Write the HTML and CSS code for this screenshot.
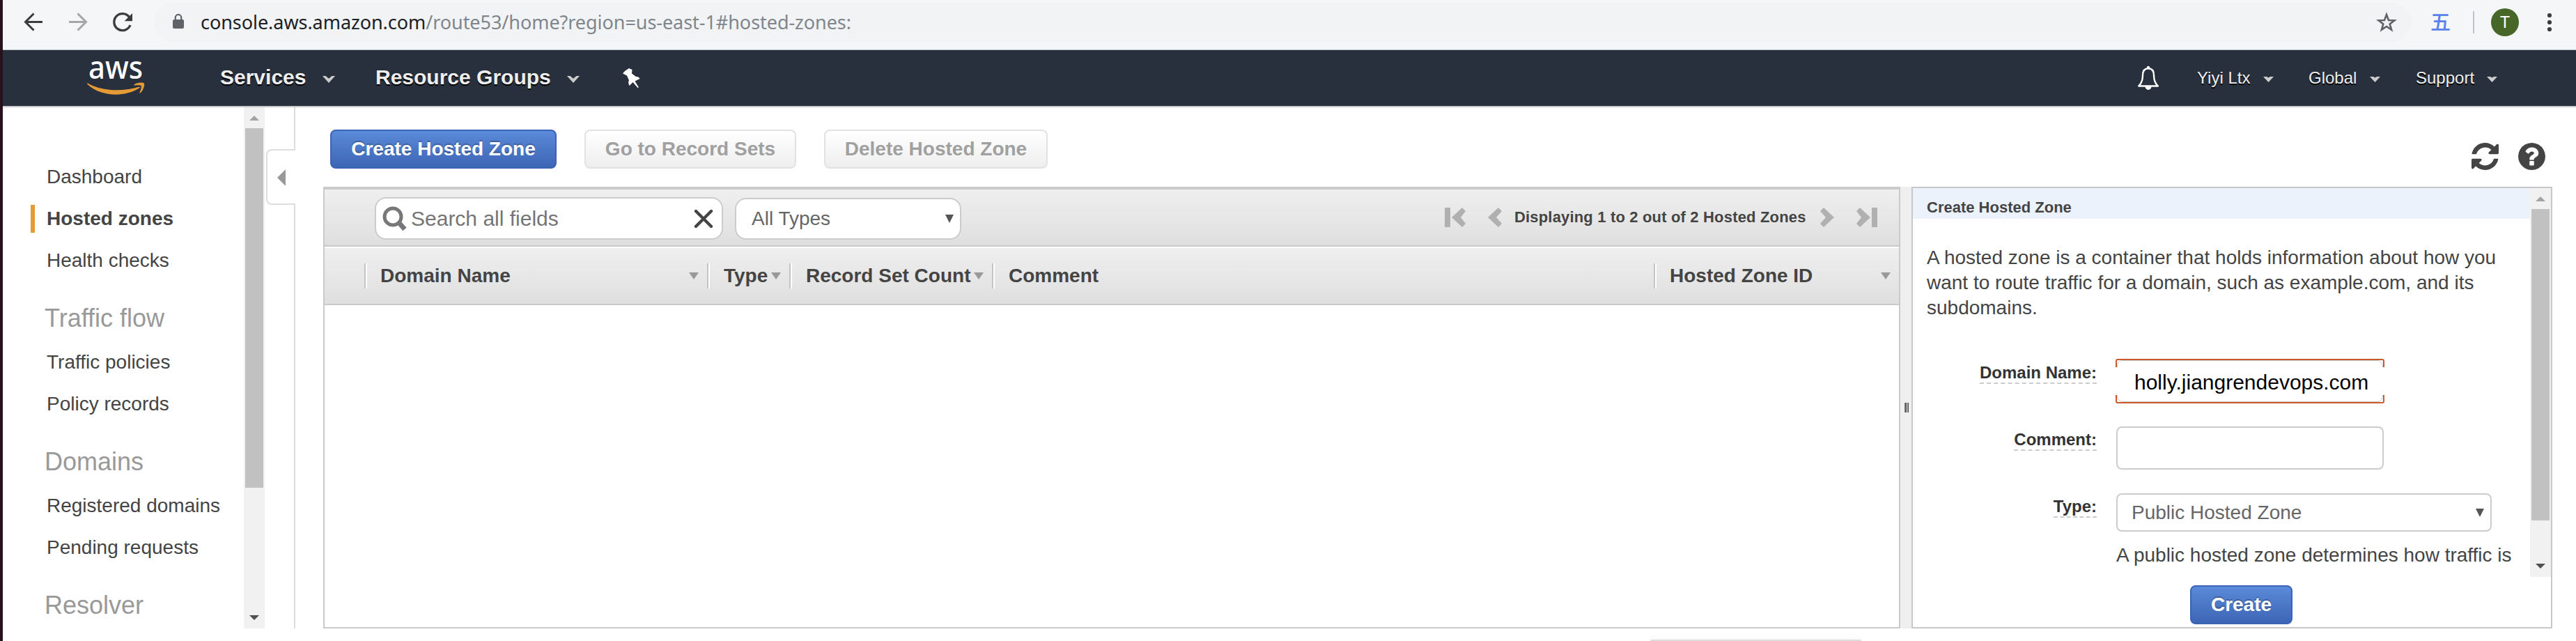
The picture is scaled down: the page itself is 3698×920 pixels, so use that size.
FILE: index.html
```html
<!DOCTYPE html>
<html lang="en">
<head>
<meta charset="utf-8">
<title>Route 53 Console - Hosted Zones</title>
<link rel="stylesheet" href="styles.css">
</head>
<body>
<header class="browser">
  <svg class="browser-nav" viewBox="0 0 217 71" width="217" height="71" fill="none">
    <g stroke="#3c3c3c" stroke-width="3"><path d="M57 31.5H33M44.500 19.500L32.500 31.500L44.500 43.500"/></g>
    <g stroke="#a6a6a6" stroke-width="3"><path d="M95 31.5h24M107.500 19.500l12 12l-12 12"/></g>
    <path d="M181.500 24.500A12 12 0 1 0 183 36" stroke="#3c3c3c" stroke-width="3.400"/>
    <path d="M186 19v11.300h-11.300z" fill="#3c3c3c"/>
  </svg>
  <div class="omnibox">
    <svg class="lock" viewBox="0 0 18 22" width="18" height="22"><rect x="1" y="8" width="16" height="13" rx="2" fill="#5f6368"/><path d="M4.800 9V5.200a4.200 4.200 0 0 1 8.400 0V9" fill="none" stroke="#5f6368" stroke-width="2.200"/></svg>
    <div class="url"><span class="url-host">console.aws.amazon.com</span><span class="url-path">/route53/home?region=us-east-1#hosted-zones:</span></div>
    <svg class="star" viewBox="0 0 30 30" width="30" height="30"><path d="M15 4l3 8 8.400.300-6.700 5.200 2.400 8.200-7.100-4.700-7.100 4.700 2.400-8.200-6.700-5.200 8.400-.300z" fill="none" stroke="#5f6368" stroke-width="2.600"/></svg>
  </div>
  <span class="ext">五</span>
  <span class="divider"></span>
  <span class="avatar">T</span>
  <svg class="dots" viewBox="0 0 8 28" width="8" height="28" fill="#3c3c3c"><circle cx="4" cy="4" r="3.100"/><circle cx="4" cy="14" r="3.100"/><circle cx="4" cy="24" r="3.100"/></svg>
</header>

<nav class="topnav">
  <svg class="logo" viewBox="0 0 84 50" width="84" height="50">
    <text class="logo-text" x="2" y="26" textLength="78" lengthAdjust="spacingAndGlyphs">aws</text>
    <path d="M1 32.500C24 45.500 54 44 75 37.500L76 38.800C56 52.500 20 53 0 33.500C-.200 32.600.300 32.200 1 32.500z" fill="#e59b35"/>
    <path d="M67.500 34.500C72 31 80 31 81.800 32.500C83.200 34.500 81 42.500 76.500 46.500C75.800 47 75.200 46.600 75.500 45.800C77 42 78.500 37.500 77.500 36C76.500 34.800 71 35.200 68.300 35.600C67.400 35.700 67 35 67.500 34.500z" fill="#e59b35"/>
  </svg>
  <a class="nav-main nav-services">Services</a>
  <svg class="caret" viewBox="0 0 18 10" width="18" height="10"><path d="M0 0h4.500L9 3.800 13.500 0H18L9 10z" fill="#ccc"/></svg>
  <a class="nav-main nav-groups">Resource Groups</a>
  <svg class="caret" viewBox="0 0 18 10" width="18" height="10"><path d="M0 0h4.500L9 3.800 13.500 0H18L9 10z" fill="#ccc"/></svg>
  <svg class="pin" viewBox="0 0 26 28" width="26" height="28"><path d="M9 0L13.500 2 13 7.500 19 12C21 11.500 23.500 12.500 24.500 15L17.500 18.500 23 27.500 21.500 28 14.500 20 9.500 25C8 22 7.500 19.500 9 17.500L6 10.500 0 7.500C1.500 5 4.500 2.500 9 0z" fill="#fff"/></svg>
  <svg class="bell" viewBox="0 0 32 36" width="32" height="36"><path d="M16 4.300C10 4.300 8 9 8 14C8 22 6 26 2.200 29.500H29.800C26 26 24 22 24 14C24 9 22 4.300 16 4.300z" fill="none" stroke="#fff" stroke-width="2.400" stroke-linejoin="round"/><circle cx="16" cy="3" r="2.200" fill="#fff"/><path d="M11.500 30a4.500 5 0 0 0 9 0z" fill="#fff"/></svg>
  <a class="nav-sub nav-user">Yiyi Ltx</a>
  <svg class="caret-sm" viewBox="0 0 15 8" width="15" height="8"><path d="M0 0h5l2.500 1.600L10 0h5L7.500 8z" fill="#ccc"/></svg>
  <a class="nav-sub nav-region">Global</a>
  <svg class="caret-sm" viewBox="0 0 15 8" width="15" height="8"><path d="M0 0h5l2.500 1.600L10 0h5L7.500 8z" fill="#ccc"/></svg>
  <a class="nav-sub nav-support">Support</a>
  <svg class="caret-sm" viewBox="0 0 15 8" width="15" height="8"><path d="M0 0h5l2.500 1.600L10 0h5L7.500 8z" fill="#ccc"/></svg>
</nav>

<div class="page">
  <aside class="sidebar">
    <a class="item">Dashboard</a>
    <a class="item active">Hosted zones</a>
    <a class="item">Health checks</a>
    <h2 class="group">Traffic flow</h2>
    <a class="item">Traffic policies</a>
    <a class="item">Policy records</a>
    <h2 class="group">Domains</h2>
    <a class="item">Registered domains</a>
    <a class="item">Pending requests</a>
    <h2 class="group">Resolver</h2>
  </aside>
  <div class="scrollbar side-scroll">
    <svg class="sb-arrow" viewBox="0 0 14 7" width="14" height="7"><path d="M7 0l7 7H0z" fill="#a3a3a3"/></svg>
    <div class="thumb"></div>
    <svg class="sb-arrow sb-down" viewBox="0 0 14 7" width="14" height="7"><path d="M7 7l7-7H0z" fill="#505050"/></svg>
  </div>
  <div class="gutter">
    <div class="rail rail-top"></div>
    <div class="toggle"><svg viewBox="0 0 12 24" width="12" height="24"><path d="M0 12L12 0v24z" fill="#999"/></svg></div>
    <div class="rail rail-bottom"></div>
  </div>

  <main class="main">
    <div class="actions">
      <button class="btn primary create-zone">Create Hosted Zone</button>
      <button class="btn disabled go-records">Go to Record Sets</button>
      <button class="btn disabled delete-zone">Delete Hosted Zone</button>
      <svg class="refresh" viewBox="0 128 1536 1536" width="39" height="39"><path fill="#444" d="M1511 1056q0 5-1 7-64 268-268 434.500t-478 166.500q-146 0-282.500-55t-243.500-157l-129 129q-19 19-45 19t-45-19-19-45v-448q0-26 19-45t45-19h448q26 0 45 19t19 45-19 45l-137 137q71 66 161 102t187 36q134 0 250-65t186-179q11-17 53-117 8-23 30-23h192q13 0 22.500 9.500t9.500 22.500zm25-800v448q0 26-19 45t-45 19h-448q-26 0-45-19t-19-45 19-45l138-138q-148-137-349-137-134 0-250 65t-186 179q-11 17-53 117-8 23-30 23h-199q-13 0-22.500-9.500t-9.500-22.500v-7q65-268 270-434.500t480-166.500q146 0 284 55.500t245 156.500l130-129q19-19 45-19t45 19 19 45z"/></svg>
      <svg class="help" viewBox="0 128 1536 1536" width="39" height="39"><path fill="#444" d="M896 1376v-192q0-14-9-23t-23-9h-192q-14 0-23 9t-9 23v192q0 14 9 23t23 9h192q14 0 23-9t9-23zm256-672q0-88-55.500-163t-138.500-116-170-41q-243 0-371 213-15 24 8 42l132 100q7 6 19 6 16 0 25-12 53-68 86-92 34-24 86-24 48 0 85.500 26t37.500 59q0 38-20 61t-68 45q-63 28-115.500 86.500t-52.500 125.500v36q0 14 9 23t23 9h192q14 0 23-9t9-23q0-19 21.500-49.500t54.500-49.500q32-18 49-28.500t46-35 44.500-48 28-60.500 12.500-81zm384 192q0 209-103 385.500t-279.500 279.500-385.500 103-385.500-103-279.500-279.500-103-385.500 103-385.500 279.500-279.500 385.500-103 385.500 103 279.500 279.500 103 385.500z"/></svg>
    </div>

    <div class="workspace">
      <section class="table">
        <div class="filters">
          <div class="search">
            <svg class="magnifier" viewBox="0 0 36 36" width="36" height="36" fill="none"><circle cx="15" cy="15" r="12" stroke="#777" stroke-width="5"/><path d="M23.500 23.500L32 33" stroke="#777" stroke-width="7"/></svg>
            <span class="placeholder">Search all fields</span>
            <svg class="clear" viewBox="0 0 28 28" width="28" height="28"><path d="M3 3l22 22M25 3L3 25" stroke="#444" stroke-width="4.400" stroke-linecap="round"/></svg>
          </div>
          <div class="select types"><span>All Types</span><svg viewBox="0 0 12 12" width="12" height="12"><path d="M0 0h12L6 12z" fill="#555"/></svg></div>
          <div class="pager">
            <svg class="first" viewBox="0 0 32 30" width="32" height="30" fill="#b0b0b0"><path d="M1 1h8v28H1z"/><path d="M26 1l5 5-7 9 7 9-5 5L11 15z"/></svg>
            <svg class="prev" viewBox="0 0 22 30" width="22" height="30" fill="#b0b0b0"><path d="M16 1l5 5-8 9 8 9-5 5L1 15z"/></svg>
            <span class="pager-text">Displaying 1 to 2 out of 2 Hosted Zones</span>
            <svg class="next" viewBox="0 0 22 30" width="22" height="30" fill="#b0b0b0"><path d="M6 1L1 6l8 9-8 9 5 5 15-14z"/></svg>
            <svg class="last" viewBox="0 0 32 30" width="32" height="30" fill="#b0b0b0"><path d="M31 1h-8v28h8z"/><path d="M6 1L1 6l7 9-7 9 5 5 15-14z"/></svg>
          </div>
        </div>
        <div class="thead">
          <div class="col c-name"><span>Domain Name</span><i class="sort"></i></div>
          <div class="col c-type"><span>Type</span><i class="sort"></i></div>
          <div class="col c-count"><span>Record Set Count</span><i class="sort"></i></div>
          <div class="col c-comment"><span>Comment</span></div>
          <div class="col c-id"><span>Hosted Zone ID</span><i class="sort"></i></div>
        </div>
      </section>
      <div class="splitter"><i></i><i></i></div>
      <section class="panel">
        <div class="panel-scroll">
          <div class="form">
            <h3 class="panel-title">Create Hosted Zone</h3>
            <p class="intro">A hosted zone is a container that holds information about how you want to route traffic for a domain, such as example.com, and its subdomains.</p>
            <div class="row">
              <label class="label"><span>Domain Name:</span></label>
              <div class="invalid"><div class="invalid-inner"><span class="value">holly.jiangrendevops.com</span></div></div>
            </div>
            <div class="row">
              <label class="label"><span>Comment:</span></label>
              <div class="input"></div>
            </div>
            <div class="row row-type">
              <label class="label"><span>Type:</span></label>
              <div class="select zone-type"><span>Public Hosted Zone</span><svg viewBox="0 0 12 12" width="12" height="12"><path d="M0 0h12L6 12z" fill="#555"/></svg></div>
            </div>
            <p class="hint">A public hosted zone determines how traffic is</p>
          </div>
          <div class="scrollbar panel-bar">
            <svg class="sb-arrow" viewBox="0 0 14 7" width="14" height="7"><path d="M7 0l7 7H0z" fill="#a3a3a3"/></svg>
            <div class="thumb"></div>
            <svg class="sb-arrow sb-down" viewBox="0 0 14 7" width="14" height="7"><path d="M7 7l7-7H0z" fill="#505050"/></svg>
          </div>
        </div>
        <div class="panel-foot"><button class="btn primary create">Create</button></div>
      </section>
    </div>
    <div class="popup"></div>
  </main>
</div>
</body>
</html>
```
FILE: styles.css
```css
* { box-sizing: border-box; }
body {
  margin: 0;
  height: 920px;
  overflow: hidden;
  display: flex;
  flex-direction: column;
  border-left: 4px solid #27111c;
  background: #fff;
  color: #444;
  font-family: "Liberation Sans", Arial, sans-serif;
  font-size: 28px;
}
h2, h3, p { margin: 0; font-weight: normal; }
svg { display: block; flex: none; }

/* Browser toolbar */
.browser { flex: none; height: 72px; display: flex; align-items: flex-start; background: #f5f6f8; border-bottom: 1px solid #b6bcc3; }
.browser-nav { flex: none; }
.omnibox { width: 3241px; height: 56px; margin-top: 4px; border-radius: 28px; background: #f1f3f4; display: flex; align-items: center; flex: none; }
.lock { margin: 0 0 2px 26px; }
.url { margin-left: 23px; font-family: "Noto Sans", sans-serif; font-size: 27px; letter-spacing: -.05px; line-height: 40px; white-space: nowrap; }
.url-host { color: #202124; }
.url-path { color: #80868b; }
.star { margin-left: auto; margin-right: 21px; }
.ext { width: 32px; margin-left: 27px; margin-top: 10px; font: 500 29px/40px "Noto Sans CJK SC", sans-serif; color: #5b82ec; }
.divider { width: 2px; height: 32px; margin: 16px 0 0 29px; background: #c0c3ca; }
.avatar { width: 40px; height: 40px; margin: 12px 0 0 24px; border-radius: 50%; background: #466728; color: #fff; font: 24px/40px Roboto, sans-serif; text-align: center; }
.dots { margin: 18px 0 0 40px; }

/* Console navigation */
.topnav { flex: none; height: 82px; display: flex; align-items: center; background: #282f3d; border-bottom: 2px solid #c8c8ca; color: #eee; text-shadow: 0 2px 0 #000; }
.logo { margin: 0 0 0 121px; overflow: visible; }
.logo-text { font-family: "Noto Sans", sans-serif; font-weight: 500; font-size: 46px; fill: #fff; text-shadow: none; }
.nav-main { margin-bottom: 2px; font-weight: bold; font-size: 30px; line-height: 40px; }
.nav-services { width: 122px; margin-left: 107px; }
.nav-groups { width: 253px; margin-left: 58px; white-space: nowrap; }
.caret { margin: 4px 0 0 25px; }
.nav-groups + .caret { margin-left: 22px; }
.pin { margin-left: 62px; }
.bell { margin-left: auto; }
.nav-sub { font-size: 24px; line-height: 40px; }
.nav-user { width: 77px; margin-left: 54px; white-space: nowrap; }
.nav-region { width: 70px; margin-left: 50px; }
.nav-support { width: 84px; margin-left: 51px; }
.caret-sm { margin: 4px 0 0 18px; }
.nav-support + .caret-sm { margin-right: 113px; }

/* Page columns */
.page { display: flex; height: 766px; flex: none; }
.sidebar { width: 346px; padding: 70px 0 0 63px; overflow: hidden; }
.item { display: block; height: 60px; line-height: 60px; white-space: nowrap; }
.sidebar .active { font-weight: bold; margin-left: -23px; padding-left: 23px; background: linear-gradient(#e59b35, #e59b35) 0 10px / 6px 40px no-repeat; }
.group { height: 86px; line-height: 106px; margin-left: -3px; font-size: 36px; color: #999; }

.scrollbar { width: 30px; background: #f1f1f1; display: flex; flex-direction: column; align-items: center; flex: none; }
.sb-arrow { margin-top: 12px; }
.sb-down { margin-top: auto; margin-bottom: 12px; }
.thumb { width: 26px; margin-top: 11px; background: #c1c1c1; flex: none; }
.side-scroll { height: 748px; }
.side-scroll .thumb { height: 516px; }

.gutter { width: 44px; flex: none; display: flex; flex-direction: column; align-items: flex-end; }
.rail { width: 2px; background: #ddd; }
.rail-top { height: 60px; }
.rail-bottom { height: 608px; }
.toggle { width: 42px; height: 80px; border: 2px solid #ddd; border-right: 0; border-radius: 8px 0 0 8px; padding: 27px 0 0 14px; }

/* Action bar */
.main { width: 3240px; flex: none; padding: 32px 0 0 40px; }
.actions { display: flex; height: 82px; padding-left: 10px; }
.btn { height: 56px; padding: 0; border-radius: 8px; font: bold 28px/50px "Liberation Sans", Arial, sans-serif; white-space: nowrap; }
.primary { color: #fff; border: 2px solid #3b64b7; background: linear-gradient(#5a8ad9, #3d65b5); text-shadow: 0 -2px 0 rgba(0, 0, 0, .25); }
.disabled { color: #a0a0a0; border: 2px solid #e2e2e2; background: linear-gradient(#fff, #eee); }
.create-zone { width: 325px; }
.go-records { width: 304px; margin-left: 40px; }
.delete-zone { width: 321px; margin-left: 40px; }
.refresh { margin: 19px 0 0 auto; }
.help { margin: 19px 10px 0 28px; }

/* Hosted zone table */
.workspace { display: flex; height: 634px; width: 3200px; }
.table { width: 2264px; flex: none; border: 2px solid #cacaca; border-top-width: 4px; }
.filters { height: 82px; display: flex; border-bottom: 2px solid #c9c9c9; background: linear-gradient(#efefef, #dfdfdf); }
.search { width: 500px; height: 61px; margin: 11px 0 0 72px; border: 2px solid #ccc; border-radius: 16px; background: #fff; display: flex; align-items: center; padding: 0 12px 0 9px; }
.placeholder { margin-left: 5px; font-size: 30px; color: #757575; }
.clear { margin-left: auto; }
.select { display: flex; align-items: center; justify-content: space-between; background: #fff; border: 2px solid #ccc; color: #666; }
.types { width: 325px; height: 60px; margin: 12px 0 0 17px; border-radius: 16px; padding: 0 9px 0 22px; }
.pager { margin-left: auto; display: flex; align-items: center; height: 80px; }
.prev { margin-left: 30px; }
.pager-text { width: 421px; margin: 0 17px; font-weight: bold; font-size: 22px; letter-spacing: .17px; white-space: nowrap; }
.last { margin: 0 30px 0 30px; }
.thead { height: 84px; display: flex; align-items: center; padding-left: 57px; border-top: 2px solid #fff; border-bottom: 2px solid #c9c9c9; background: linear-gradient(#efefef, #dfdfdf); font-weight: bold; }
.col { height: 36px; display: flex; align-items: center; justify-content: space-between; padding: 0 12px 0 21px; border-left: 2px solid #c4c4c4; box-shadow: inset 2px 0 #fff; white-space: nowrap; }
.c-name { width: 492px; }
.c-type { width: 118px; padding-left: 22px; }
.c-count { width: 291px; padding-left: 22px; }
.c-comment { width: 950px; padding-left: 22px; }
.c-id { width: 352px; }
.sort { width: 0; border: 7px solid transparent; border-top: 10px solid #999; border-bottom: 0; }

.splitter { width: 16px; background: #efefef; display: flex; gap: 1px; padding: 310px 0 0 6px; }
.splitter i { width: 2.5px; height: 14px; background: linear-gradient(90deg, #888, #444); }

/* Create panel */
.panel { width: 920px; flex: none; border: 2px solid #c8c8ca; }
.panel-scroll { display: flex; height: 558px; }
.form { width: 886px; overflow: hidden; }
.panel-title { height: 44px; padding: 15px 0 0 20px; background: #ebf2fc; font-weight: bold; font-size: 22px; line-height: 25px; }
.intro { width: 850px; margin: 38px 0 56px 20px; line-height: 36px; }
.row { display: flex; height: 96px; align-items: flex-start; }
.row-type { height: 71px; }
.label { width: 264px; margin-right: 28px; padding-top: 5px; display: flex; justify-content: flex-end; font-weight: bold; font-size: 24px; line-height: 28px; color: #333; }
.label span { border-bottom: 2px dashed #ccc; }
.input { width: 384px; height: 62px; border: 2px solid #ccc; border-radius: 8px; }
.invalid { width: 386px; height: 64px; margin: -1px; border: 2px solid #cd5a2e; border-radius: 3px; }
.invalid-inner { height: 60px; border: 1px solid #ccc; border-radius: 8px; display: flex; align-items: center; }
.value { flex: none; width: 388px; height: 40px; margin: 0 -4px; padding-left: 28px; background: #fff; color: #000; font-size: 30px; line-height: 43px; }
.zone-type { width: 539px; height: 55px; border-radius: 8px; padding: 0 9px 0 20px; }
.hint { margin-left: 292px; line-height: 36px; white-space: nowrap; }
.panel-bar .thumb { height: 447px; }
.panel-foot { padding: 12px 0 0 398px; }
.create { width: 147px; }

.popup { width: 303px; height: 2px; margin: 16px 0 0 1905px; background: #ddd; border-top-left-radius: 4px; box-shadow: 0 0 10px rgba(0, 0, 0, .12); }
```
